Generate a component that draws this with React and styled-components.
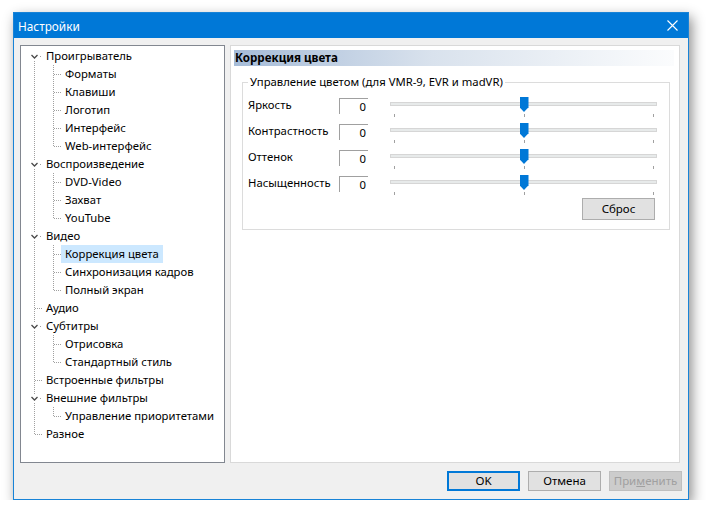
import React from "react";
import styled, { createGlobalStyle } from "styled-components";

const GlobalStyle = createGlobalStyle`
  html, body {
    margin: 0;
    padding: 0;
    background: #ffffff;
  }
  body {
    font-family: "Noto Sans", "Segoe UI", sans-serif;
    font-size: 11.3px;
    color: #000;
  }
  * {
    box-sizing: border-box;
  }
`;

const Window = styled.div`
  margin: 12px 0 0 13px;
  width: 676px;
  height: 488px;
  border: 1px solid #1883d7;
  background: #f0f0f0;
  box-shadow: 3px 5px 12px rgba(0, 0, 0, 0.45);
  display: flex;
  flex-direction: column;
`;

const TitleBar = styled.div`
  height: 25px;
  background: #0078d7;
  color: #fff;
  display: flex;
  align-items: center;
  justify-content: space-between;
  padding: 0 10px 0 4px;
`;

const Title = styled.span`
  font-size: 11.8px;
  line-height: 16px;
`;

const Body = styled.div`
  flex: 1;
  padding: 7px 7px 8px 6px;
  display: flex;
  flex-direction: column;
`;

const Main = styled.div`
  height: 418px;
  display: flex;
  gap: 5px;
`;

const TreeBox = styled.div`
  width: 205px;
  background: #fff;
  border: 1px solid #828790;
  padding-top: 1px;
`;

const TreeRow = styled.div`
  display: flex;
  height: 18px;
  align-items: stretch;
`;

const DOT_V =
  "repeating-linear-gradient(to bottom, #a0a0a0 0 1px, transparent 1px 2px)";
const DOT_H =
  "repeating-linear-gradient(to right, #a0a0a0 0 1px, transparent 1px 2px)";

const guideBackground = ({ $v, $h, $wide }) => {
  const width = $wide ? 21 : 19;
  const layers = [];
  if ($v === "full") layers.push(`${DOT_V} 13px 0 / 1px 100% no-repeat`);
  if ($v === "up") layers.push(`${DOT_V} 13px 0 / 1px 10px no-repeat`);
  if ($v === "down") layers.push(`${DOT_V} 13px 12px / 1px 6px no-repeat`);
  if ($h != null)
    layers.push(`${DOT_H} ${$h}px 9px / ${width - $h}px 1px no-repeat`);
  return layers.length ? layers.join(", ") : "none";
};

const Guide = styled.span`
  flex: none;
  width: ${(p) => (p.$wide ? 21 : 19)}px;
  background: ${guideBackground};
  display: flex;
  align-items: center;
`;

const Expander = styled.svg`
  width: 9px;
  height: 9px;
  margin-left: 9px;
  background: #fff;
`;

const NodeLabel = styled.span`
  padding: 0 4px;
  line-height: 18px;
  white-space: nowrap;
  background: ${(p) => (p.$selected ? "#cce8ff" : "transparent")};
`;

const Panel = styled.div`
  width: 450px;
  background: #fff;
  border: 1px solid #d9d9d9;
  padding: 4px 5px 0 3px;
  display: flex;
  flex-direction: column;
`;

const PanelHeader = styled.div`
  height: 16px;
  line-height: 16px;
  font-weight: 700;
  font-size: 11.6px;
  padding-left: 1px;
  background: linear-gradient(to right, #a6bcd8 0%, #d9e2ed 45%, #fbfcfd 100%);
`;

const Group = styled.fieldset`
  margin: 8px 4px 0 8px;
  padding: 3px 13px 9px 5px;
  border: 1px solid #dcdcdc;
  min-width: 0;
`;

const Legend = styled.legend`
  padding: 0 2px;
  line-height: 16px;
`;

const ControlRow = styled.div`
  display: grid;
  grid-template-columns: 91px 29px 267px;
  height: 26px;
  & > :nth-child(3) {
    margin-left: 22px;
  }
`;

const ControlLabel = styled.span`
  line-height: 16px;
  margin-top: 4px;
  white-space: nowrap;
`;

const NumberBox = styled.div`
  margin-top: 5px;
  height: 16px;
  border-top: 1px solid #a0a0a0;
  border-left: 1px solid #a0a0a0;
  text-align: right;
  padding-right: 2px;
  line-height: 15px;
`;

const SliderBox = styled.div`
  position: relative;
  width: 267px;
  height: 26px;
`;

const Track = styled.div`
  margin-top: 9px;
  height: 4px;
  background: #e7eaea;
  border: 1px solid #d6d6d6;
`;

const Ticks = styled.div`
  display: flex;
  justify-content: space-between;
  padding: 0 3px 0 4px;
  margin-top: 8px;
`;

const Tick = styled.span`
  width: 1px;
  height: 3px;
  background: #a0a0a0;
`;

const Thumb = styled.div`
  position: absolute;
  top: 4px;
  width: 9px;
  height: 15px;
  margin-left: -4px;
  background: #0078d7;
  clip-path: polygon(0 0, 100% 0, 100% 68%, 50% 100%, 0 68%);
`;

const ButtonRow = styled.div`
  display: flex;
  justify-content: flex-end;
  gap: 8px;
  margin-top: ${(p) => p.$top || 0}px;
  margin-right: ${(p) => p.$right || 0}px;
`;

const Button = styled.button`
  width: 73px;
  height: ${(p) => p.$h || 20}px;
  font-family: inherit;
  font-size: 11.5px;
  line-height: 14px;
  padding: 0;
  color: ${(p) => (p.disabled ? "#a0a0a0" : "#000")};
  background: ${(p) => (p.disabled ? "#cccccc" : "#e1e1e1")};
  border: ${(p) =>
    p.$default
      ? "2px solid #0078d7"
      : p.disabled
      ? "1px solid #bfbfbf"
      : "1px solid #adadad"};
`;

const tree = [
  {
    label: "Проигрыватель",
    children: ["Форматы", "Клавиши", "Логотип", "Интерфейс", "Web-интерфейс"],
  },
  { label: "Воспроизведение", children: ["DVD-Video", "Захват", "YouTube"] },
  {
    label: "Видео",
    children: ["Коррекция цвета", "Синхронизация кадров", "Полный экран"],
  },
  { label: "Аудио" },
  { label: "Субтитры", children: ["Отрисовка", "Стандартный стиль"] },
  { label: "Встроенные фильтры" },
  { label: "Внешние фильтры", children: ["Управление приоритетами"] },
  { label: "Разное" },
];

const SELECTED = "Коррекция цвета";

const controls = [
  { label: "Яркость", value: 0 },
  { label: "Контрастность", value: 0 },
  { label: "Оттенок", value: 0 },
  { label: "Насыщенность", value: 0 },
];

const Chevron = () => (
  <Expander viewBox="0 0 9 9">
    <polyline
      points="1.5,3 4.5,6 7.5,3"
      fill="none"
      stroke="#4a4a4a"
      strokeWidth="1.3"
    />
  </Expander>
);

const TreeView = () => {
  const rows = [];
  tree.forEach((node, i) => {
    const first = i === 0;
    const last = i === tree.length - 1;
    const parent = !!node.children;
    rows.push(
      <TreeRow key={node.label}>
        <Guide
          $wide
          $v={first ? "down" : last ? "up" : "full"}
          $h={parent ? 19 : 14}
        >
          {parent && <Chevron />}
        </Guide>
        <NodeLabel $selected={node.label === SELECTED}>{node.label}</NodeLabel>
      </TreeRow>
    );
    (node.children || []).forEach((child, j) => {
      const lastChild = j === node.children.length - 1;
      rows.push(
        <TreeRow key={child}>
          <Guide $v="full" />
          <Guide $wide $v={lastChild ? "up" : "full"} $h={14} />
          <NodeLabel $selected={child === SELECTED}>{child}</NodeLabel>
        </TreeRow>
      );
    });
  });
  return <TreeBox>{rows}</TreeBox>;
};

const Slider = ({ value, min = -100, max = 100 }) => {
  const pct = ((value - min) / (max - min)) * 100;
  return (
    <SliderBox>
      <Track />
      <Ticks>
        <Tick />
        <Tick />
        <Tick />
      </Ticks>
      <Thumb style={{ left: `calc(4px + (100% - 8px) * ${pct / 100})` }} />
    </SliderBox>
  );
};

const CloseIcon = () => (
  <svg width="11" height="11" viewBox="0 0 11 11">
    <path
      d="M0.5 0.5 L10.5 10.5 M10.5 0.5 L0.5 10.5"
      stroke="#fff"
      strokeWidth="1.1"
    />
  </svg>
);

export default function App() {
  return (
    <>
      <GlobalStyle />
      <Window>
        <TitleBar>
          <Title>Настройки</Title>
          <CloseIcon />
        </TitleBar>
        <Body>
          <Main>
            <TreeView />
            <Panel>
              <PanelHeader>Коррекция цвета</PanelHeader>
              <Group>
                <Legend>Управление цветом (для VMR-9, EVR и madVR)</Legend>
                {controls.map((c) => (
                  <ControlRow key={c.label}>
                    <ControlLabel>{c.label}</ControlLabel>
                    <NumberBox>{c.value}</NumberBox>
                    <Slider value={c.value} />
                  </ControlRow>
                ))}
                <ButtonRow $top={1} $right={1}>
                  <Button $h={22}>Сброс</Button>
                </ButtonRow>
              </Group>
            </Panel>
          </Main>
          <ButtonRow $top={8} $right={-1}>
            <Button $default>OK</Button>
            <Button>Отмена</Button>
            <Button disabled>
              При<u>м</u>енить
            </Button>
          </ButtonRow>
        </Body>
      </Window>
    </>
  );
}
